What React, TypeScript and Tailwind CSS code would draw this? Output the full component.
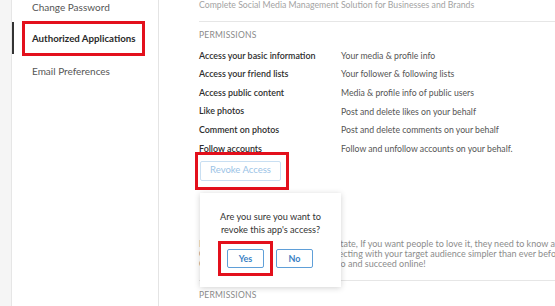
const permissions = [
  ['Access your basic information', 'Your media & profile info'],
  ['Access your friend lists', 'Your follower & following lists'],
  ['Access public content', 'Media & profile info of public users'],
  ['Like photos', 'Post and delete likes on your behalf'],
  ['Comment on photos', 'Post and delete comments on your behalf'],
  ['Follow accounts', 'Follow and unfollow accounts on your behalf.'],
];

export default function App() {
  return (
    <div
      className="flex w-[555px] h-[306px] overflow-hidden bg-white text-[#333]"
      style={{ fontFamily: 'Lato, "Liberation Sans", sans-serif' }}
    >
      {/* strip */}
      <div className="w-[12px] shrink-0 bg-[#f5f5f5] border-r border-[#e6e6e6]" />

      {/* sidebar */}
      <nav className="w-[147px] shrink-0 border-r border-[#e4e4e4] text-[10px] whitespace-nowrap">
        <div className="h-[14px] pl-[20px] leading-[14px] text-[#555]">Change Password</div>
        <div className="relative mt-[8px] h-[32px] flex items-center">
          <span className="absolute left-0 top-0 h-full w-[2px] bg-[#333]" />
          <div className="ml-[10px] border-[3px] border-[#e3101c] w-[123px] h-[35px] flex items-center pl-[7px] text-[9.7px] font-bold text-[#2a2a2a]">
            Authorized Applications
          </div>
        </div>
        <div className="mt-[10px] pl-[20px] leading-[14px] text-[#555]">Email Preferences</div>
      </nav>

      {/* main */}
      <main className="relative flex-1 pl-[40px]">
        <p className="-mt-[2px] text-[8.7px] leading-[14px] text-[#a3a3a3] whitespace-nowrap">
          Complete Social Media Management Solution for Businesses and Brands
        </p>
        <div className="mt-[9px] border-t border-[#e6e6e6]" />
        <h3 className="mt-[7px] text-[8.5px] leading-[12px] tracking-wide text-[#8a8a8a]">PERMISSIONS</h3>

        <div className="mt-[5px] flex flex-col">
          {permissions.map(([label, desc]) => (
            <div key={label} className="flex h-[18.6px] items-center whitespace-nowrap">
              <span className="w-[142px] text-[8.9px] font-semibold text-[#2d2d2d]">{label}</span>
              <span className="text-[8.7px] text-[#555]">{desc}</span>
            </div>
          ))}
        </div>

        <div className="-mt-[6px] -ml-[4px] w-[94px] h-[38px] border-[3px] border-[#e3101c] flex items-center pl-[2px]">
          <button className="w-[81px] h-[20px] border border-[#c9dff2] rounded-[2px] text-[9.5px] text-[#9bc3e6]">
            Revoke Access
          </button>
        </div>

        {/* app description, mostly under the popover */}
        <div className="mt-[49px] text-[9px] leading-[10px] text-[#8c8c8c] whitespace-nowrap">
          <p>No matter how amazing your real estate, If you want people to love it, they need to know about it.</p>
          <p>Our all-in-one platform makes connecting with your target audience simpler than ever before.</p>
          <p>Grow your following, build a portfolio and succeed online!</p>
        </div>
        <div className="mt-[11px] border-t border-[#e6e6e6]" />
        <h3 className="mt-[8px] text-[8.5px] leading-[12px] tracking-wide text-[#8a8a8a]">PERMISSIONS</h3>

        {/* confirm popover */}
        <div className="absolute left-[41px] top-[193px] w-[141px] h-[94px] bg-white shadow-[0_1px_6px_rgba(0,0,0,0.18)] pt-[17px]">
          <p className="text-center text-[9.2px] leading-[13px] text-[#333]">
            Are you sure you want to
            <br />
            revoke this app's access?
          </p>
          <div className="mt-[5px] pl-[18px] flex items-center gap-[3px]">
            <div className="border-[3px] border-[#e3101c] w-[55px] h-[35px] flex items-center justify-center">
              <button className="w-[37px] h-[19px] border border-[#5f9fd8] rounded-[2px] text-[9px] font-bold text-[#3a7fc4]">
                Yes
              </button>
            </div>
            <button className="w-[37px] h-[19px] border border-[#5f9fd8] rounded-[2px] text-[9px] font-bold text-[#3a7fc4]">
              No
            </button>
          </div>
        </div>
      </main>
    </div>
  );
}
